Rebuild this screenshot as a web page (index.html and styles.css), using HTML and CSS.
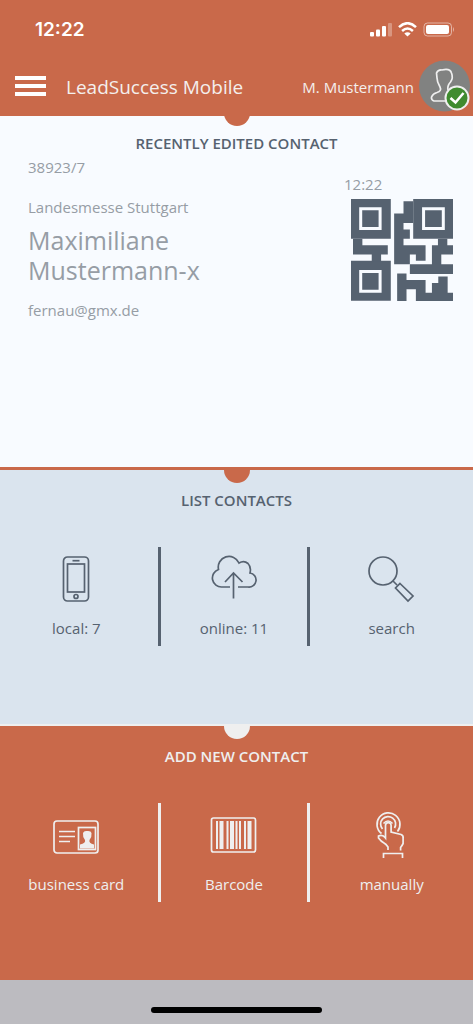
FILE: index.html
```html
<!DOCTYPE html>
<html lang="en">
<head>
<meta charset="utf-8">
<meta name="viewport" content="width=device-width, initial-scale=1">
<title>LeadSuccess Mobile</title>
<link rel="stylesheet" href="styles.css">
</head>
<body>
<div class="app">
  <header class="header">
    <div class="status">
      <span class="clock">12:22</span>
      <svg class="status-icons" width="86" height="16" viewBox="0 0 86 16" aria-hidden="true">
        <g fill="#fff">
          <rect x="0" y="10" width="4" height="4.500" rx="1"/>
          <rect x="6" y="7.500" width="4" height="7" rx="1"/>
          <rect x="12" y="4" width="4" height="10.500" rx="1"/>
          <rect x="18" y="1" width="4" height="13.500" rx="1" opacity=".3"/>
          <rect x="56" y="3" width="23" height="9" rx="2"/>
          <path d="M83 5v5q2-2.500 0-5z" opacity=".5"/>
          <path d="M34.300 11.500a5 5 0 0 1 6.400 0L37.500 14.600z"/>
        </g>
        <g fill="none" stroke="#fff" stroke-width="2.500">
          <path d="M29 5.200q8.500-8 17 0"/>
          <path d="M32.100 9q5.400-5 10.800 0"/>
          <rect x="54" y="1" width="27.500" height="13" rx="3.500" stroke-width="1" opacity=".5"/>
        </g>
      </svg>
    </div>
    <div class="toolbar">
      <button class="menu" type="button" aria-label="Menu"><span></span><span></span><span></span></button>
      <h1 class="title">LeadSuccess Mobile</h1>
      <button class="user" type="button">
        <span>M. Mustermann</span>
        <svg width="51" height="52" viewBox="0 0 51 52" aria-hidden="true">
          <circle cx="25.500" cy="26" r="25.500" fill="#818281"/>
          <path d="M27 41H15Q12 40 12.500 37Q14 33.500 18 32.500Q23 31 21 27Q18 22 18 18L17.500 13Q19 9.500 23 10Q31 8 32.500 13Q34.500 18 31.500 22Q28 26 29 30" fill="none" stroke="#efefef" stroke-width="1.700"/>
          <circle cx="38" cy="38" r="11.500" fill="#3f8b2f" stroke="#efefef" stroke-width="2"/>
          <path d="M31.500 38l5 4.500 8-9.500" fill="none" stroke="#fff" stroke-width="2.600"/>
        </svg>
      </button>
    </div>
  </header>

  <main class="sections">
    <section class="section contact">
      <h2 class="heading">RECENTLY EDITED CONTACT</h2>
      <div class="card">
        <div class="details">
          <p>38923/7</p>
          <p class="event">Landesmesse Stuttgart</p>
          <p class="name">Maximiliane Mustermann-x</p>
          <p>fernau@gmx.de</p>
        </div>
        <div class="code">
          <time>12:22</time>
          <svg class="qr" viewBox="55 87 305 305" role="img" aria-label="QR code">
            <g fill="#566270">
              <path d="M55 87h119v119H55zM241 87h119v119H241zM55 272h119v119H55z"/>
              <path d="M61 206h28v19h76v28h-20v20h-28v-20H61z"/>
              <path d="M212 94h29v65h-29v19h19v28h-19v19h66v47h-29v-19h-18v29h-47V130h28z"/>
              <path d="M315 206h28v19h17v28h-35v29h35v29H231v-29h66v-57h18z"/>
              <path d="M193 310h28v19h57v38h19v-29h19v-19h28v48h16v25H249v-35h-28v35h-28z"/>
            </g>
            <g fill="#566270" stroke="#f8fbff" stroke-width="9">
              <path d="M84 116h58v59H84zM272 116h59v59H272zM84 304h58v59H84z"/>
            </g>
          </svg>
        </div>
      </div>
    </section>

    <section class="section list">
      <h2 class="heading">LIST CONTACTS</h2>
      <div class="actions">
        <button class="action" type="button">
          <svg width="48" height="48" viewBox="0 0 48 48" fill="none" stroke="currentColor" stroke-width="1.700" aria-hidden="true">
            <rect x="11.500" y="2" width="25" height="44" rx="4"/><rect x="15.500" y="9" width="17" height="28"/>
            <path d="M20.500 5.700h7"/><circle cx="24" cy="41.500" r="2"/>
          </svg>
          <span>local: 7</span>
        </button>
        <button class="action" type="button">
          <svg width="48" height="48" viewBox="0 0 48 48" fill="none" stroke="currentColor" stroke-width="1.700" aria-hidden="true">
            <path d="M20 32h-8A9 9 0 0 1 8.500 14.500A10.800 10.800 0 0 1 29 8Q34 5 38 8.500Q41.500 12 40 18A7 7 0 0 1 38 32H28M23.500 43.500V18M15 27L23.500 18l9 9"/>
          </svg>
          <span>online: 11</span>
        </button>
        <button class="action" type="button">
          <svg width="48" height="48" viewBox="0 0 48 48" fill="none" stroke="currentColor" stroke-width="1.700" aria-hidden="true">
            <circle cx="15" cy="16" r="14"/><path d="M25 26l4 4M32 28.500l13 12.500-5 5-12.500-13z"/>
          </svg>
          <span>search</span>
        </button>
      </div>
    </section>

    <section class="section add">
      <h2 class="heading">ADD NEW CONTACT</h2>
      <div class="actions">
        <button class="action" type="button">
          <svg width="48" height="48" viewBox="0 0 48 48" fill="none" stroke="currentColor" stroke-width="1.700" aria-hidden="true">
            <rect x="2" y="10" width="44" height="32" rx="3"/><rect x="26.500" y="16.500" width="17" height="22"/>
            <path d="M7 20.500h16M7 25.500h16M7 30.500h11"/>
            <path d="M31 22q1-2.500 4-2 4-.5 4.500 2 .5 4-2 7-1 3 4.500 4.500v4H28v-4q6-1.500 5-4.500-2.500-3-2-7z" fill="currentColor" stroke="none"/>
          </svg>
          <span>business card</span>
        </button>
        <button class="action" type="button">
          <svg width="48" height="48" viewBox="0 0 48 48" fill="none" stroke="currentColor" stroke-width="1.700" aria-hidden="true">
            <rect x="1.500" y="7" width="44" height="34" rx="2"/>
            <path d="M6 10h2v28H6zM9.500 10h4v28h-4zM16.500 10h2v28h-2zM20 10h4v28h-4zM25.500 10h2v28h-2zM29 10h2v28h-2zM34 10h2v28h-2zM37.500 10h4v28h-4z" fill="currentColor" stroke="none"/>
          </svg>
          <span>Barcode</span>
        </button>
        <button class="action" type="button">
          <svg width="48" height="48" viewBox="0 0 48 48" fill="none" stroke="currentColor" stroke-width="1.700" aria-hidden="true">
            <path d="M13.500 22.500A11.500 11.500 0 1 1 29.500 20.500M14.500 18A7.500 7.500 0 1 1 26.500 17M15.500 12.500q4.500-5 9 0"/>
            <path d="M20 39v-3q-2-3-4-4-3-1.500-5.500-5v-2q4-2 7 2V14.500a2.800 2.800 0 0 1 5.600 0V21l10 2.500q2.500 1 2 4v5q-1 2-2.500 4v3M15.500 47v-4.500h19V47"/>
          </svg>
          <span>manually</span>
        </button>
      </div>
    </section>
  </main>
  <footer class="footer"><div class="home"></div></footer>
</div>
</body>
</html>
```

FILE: styles.css
```css
* { box-sizing: border-box; }
body { margin: 0; font-family: "Open Sans", "Noto Sans", sans-serif; font-size: 15px; line-height: 20px; color: #566270; }
h1, h2, p { margin: 0; }
button { border: 0; padding: 0; background: none; color: inherit; font: inherit; cursor: pointer; }
svg { display: block; flex: none; }
.app { display: flex; flex-direction: column; min-height: 100vh; }

.header { background: #c9694a; color: #f4efed; }
.status { display: flex; justify-content: space-between; align-items: center; padding: 18px 17px 18px 35px; }
.clock { font: 600 19px/24px Inter, sans-serif; color: #fff; }
.toolbar { display: flex; align-items: center; padding: 0 3px 4px 15px; }
.menu { display: flex; flex-direction: column; gap: 4px; width: 31px; }
.menu span { height: 4px; width: 100%; background: #fff; }
.title { margin-left: 20px; padding-top: 1px; font-size: 19px; line-height: 28px; font-weight: 400; }
.user { display: flex; align-items: center; gap: 5px; margin-left: auto; white-space: nowrap; }
.user span { padding-top: 2px; }

.sections { display: flex; flex-direction: column; flex: 1; }
.section { position: relative; flex: 0 0 auto; }
.section::before { content: ""; position: absolute; left: calc(50% - 13px); top: 0; width: 26px; height: 13px; border-radius: 0 0 13px 13px; background: #c9694a; }
.contact { flex-grow: 1; background: #f8fbff; padding-top: 17px; }
.contact::before { top: -3px; }
.list { background: #dae4ee; border-top: 3px solid #c9694a; padding-top: 20px; }
.add { background: #c9694a; color: #efefef; border-top: 2px solid #efefef; padding-top: 20px; }
.add::before { background: #efefef; }
.heading { font-size: 15px; line-height: 20px; font-weight: 600; text-align: center; }

.card { display: flex; justify-content: space-between; padding: 4px 20px 0 28px; color: #969da5; min-height: 308px; }
.details { max-width: 200px; }
.event { margin-top: 20px; }
.name { margin: 8px 0 15px; font-size: 25px; line-height: 30px; }
.code { padding-top: 17px; }
.code time { display: block; margin-left: -7px; }
.qr { width: 102px; height: 102px; margin-top: 5px; }

.actions { display: grid; grid-template-columns: repeat(3, 1fr); margin-top: 37px; padding-bottom: 78px; }
.action { display: flex; flex-direction: column; align-items: center; gap: 15px; padding: 8px 0 8px; margin-right: 5px; }
.action:nth-child(2) { border-left: 3px solid; border-right: 3px solid; }

.footer { display: flex; justify-content: center; align-items: flex-end; height: 44px; padding-bottom: 11px; background: #bcbbc0; }
.home { width: 36%; height: 6px; border-radius: 3px; background: #000; }
```
